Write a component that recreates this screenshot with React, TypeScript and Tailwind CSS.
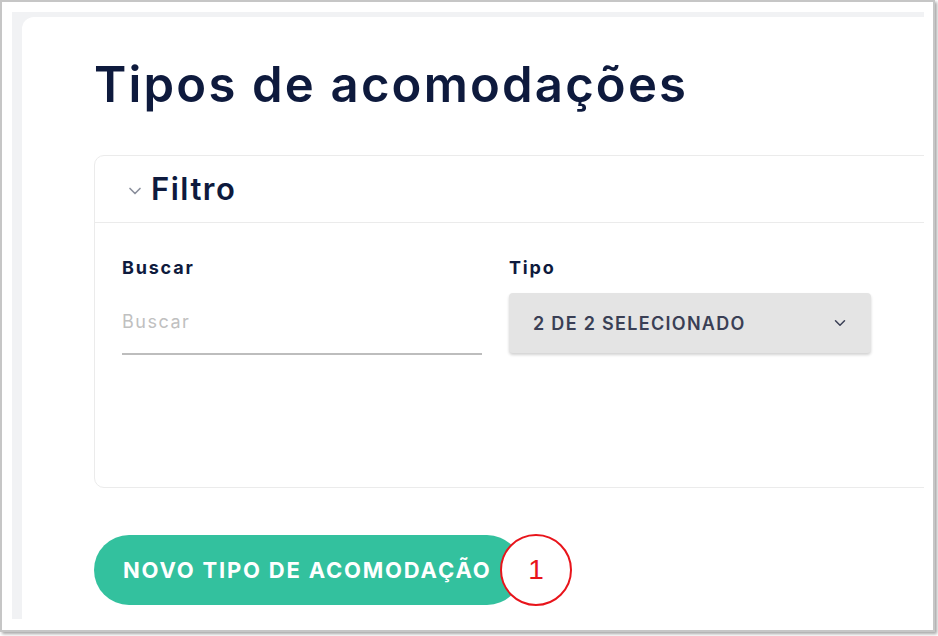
import React from 'react';

function Chevron({ className }: { className?: string }) {
  return (
    <svg viewBox="0 0 24 24" className={className} fill="none" stroke="currentColor" strokeWidth={2} strokeLinecap="round" strokeLinejoin="round">
      <path d="M6 9l6 6 6-6" />
    </svg>
  );
}

export default function App() {
  return (
    <div className="w-[938px] h-[636px] bg-white" style={{ fontFamily: 'Inter, "Noto Sans", sans-serif' }}>
      <div className="w-[935px] h-[632px] border-2 border-[#c6c6c6] bg-white pt-[10px] pl-[10px] shadow-[2px_2px_3px_rgba(0,0,0,0.35)]">
        <div className="w-[912px] h-[607px] bg-[#f1f2f4] pl-[10px] pt-[5px] overflow-hidden flex">
          <div className="flex-1 bg-white rounded-tl-[12px] pl-[72px] pt-[38px]">
            <h1 className="text-[49px] leading-[60px] font-semibold text-[#0e1a3d] tracking-[2.2px]">Tipos de acomodações</h1>

            <div className="mt-[40px] w-[860px] border border-[#ebebeb] rounded-[10px]">
              <div className="h-[67px] flex items-center pl-[30px] border-b border-[#ebebeb]">
                <Chevron className="w-[20px] h-[20px] text-[#8a8f9c] mt-[3px]" />
                <span className="ml-[6px] text-[31px] font-semibold text-[#0e1a3d] tracking-[1.5px]">Filtro</span>
              </div>
              <div className="h-[264px] pl-[27px] pt-[33px] flex gap-[27px]">
                <div className="w-[360px] flex flex-col">
                  <label className="text-[18px] font-bold text-[#0e1a3d] leading-[24px] tracking-[1.8px]">Buscar</label>
                  <div className="mt-[30px] h-[45px] border-b-2 border-[#bdbdbd] flex items-start">
                    <span className="text-[18px] text-[#c0c0c0] leading-[24px] tracking-[1.5px]">Buscar</span>
                  </div>
                </div>
                <div className="w-[362px] flex flex-col">
                  <label className="text-[18px] font-bold text-[#0e1a3d] leading-[24px] tracking-[1.8px]">Tipo</label>
                  <div className="mt-[13px] h-[60px] bg-[#e4e4e4] rounded-[4px] shadow-[0_2px_3px_rgba(0,0,0,0.18)] flex items-center justify-between pl-[24px] pr-[22px]">
                    <span className="text-[18px] font-semibold text-[#3a3f55] tracking-[1.3px]">2 DE 2 SELECIONADO</span>
                    <Chevron className="w-[18px] h-[18px] text-[#3a3f55]" />
                  </div>
                </div>
              </div>
            </div>

            <div className="mt-[47px] relative w-[480px] h-[72px]">
              <button className="h-[70px] w-[428px] rounded-full bg-[#33c19e] text-white text-[22px] font-bold pl-[29px] text-left tracking-[1.8px]">
                NOVO TIPO DE ACOMODAÇÃO
              </button>
              <div className="absolute left-[406px] top-[-1px] w-[72px] h-[72px] rounded-full border-2 border-[#e8141b] bg-white flex items-center justify-center">
                <span className="text-[28px] text-[#e8141b] leading-none" style={{ fontFamily: '"Liberation Sans", Arial, sans-serif' }}>1</span>
              </div>
            </div>
          </div>
        </div>
      </div>
    </div>
  );
}
